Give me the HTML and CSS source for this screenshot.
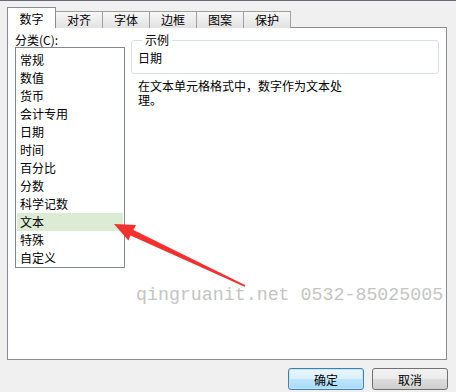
FILE: index.html
```html
<!DOCTYPE html>
<html lang="zh-CN">
<head>
    <meta charset="UTF-8">
    <title>设置单元格格式</title>
    <link rel="stylesheet" href="styles.css">
</head>
<body>
    <div class="dialog">
        <div class="tabs">
            <div class="tab active">数字</div>
            <div class="tab">对齐</div>
            <div class="tab">字体</div>
            <div class="tab">边框</div>
            <div class="tab">图案</div>
            <div class="tab">保护</div>
        </div>
        <div class="panel">
            <div class="left-col">
                <div class="label">分类(C):</div>
                <ul class="category-list">
                    <li>常规</li>
                    <li>数值</li>
                    <li>货币</li>
                    <li>会计专用</li>
                    <li>日期</li>
                    <li>时间</li>
                    <li>百分比</li>
                    <li>分数</li>
                    <li>科学记数</li>
                    <li class="selected">文本</li>
                    <li>特殊</li>
                    <li>自定义</li>
                </ul>
            </div>
            <div class="right-col">
                <fieldset class="sample">
                    <legend>示例</legend>
                    <div class="sample-value">日期</div>
                </fieldset>
                <p class="desc">在文本单元格格式中，数字作为文本处理。</p>
            </div>
        </div>
        <div class="buttons">
            <button class="btn default">确定</button>
            <button class="btn">取消</button>
        </div>

        <!-- annotation overlay from the screenshot -->
        <svg class="arrow" width="456" height="392" viewBox="0 0 456 392">
            <polygon points="114,224 136,225 133.5,230 245.5,285.3 244.6,286.7 130.5,235.5 128.4,240.5" fill="#f2302e"/>
        </svg>
        <div class="watermark">qingruanit.net 0532-85025005</div>
    </div>
</body>
</html>
```

FILE: styles.css
```css
body { margin: 0; background: #f0f0f0; font-family: "Noto Sans CJK SC", "Liberation Sans", sans-serif; font-size: 12px; color: #000; }
.dialog { position: relative; height: 391px; border-top: 1px solid #6a6a72; padding: 7px 9px 0 7px; overflow: hidden; }

.tabs { display: flex; align-items: flex-end; height: 20px; position: relative; z-index: 1; }
.tab { width: 46px; height: 16px; line-height: 16px; text-align: center; background: linear-gradient(#f7f7f7, #e2e2e2); border: 1px solid #a0a0a0; border-bottom: none; margin-right: -1px; }
.tab.active { width: 47px; height: 20px; line-height: 22px; background: #fff; border-color: #898c95; }
.tab.active + .tab { border-left: 1px solid #898c95; }

.panel { display: flex; gap: 6px; height: 333px; box-sizing: border-box; margin-top: -1px; background: #fff; border: 1px solid #898c95; padding: 4px 7px 0 7px; }

.label { height: 15px; line-height: 15px; }
.category-list { list-style: none; margin: 0; padding: 3px 1px 0; width: 110px; height: 221px; box-sizing: border-box; border: 1px solid #828790; }
.category-list li { height: 18px; line-height: 18px; padding-left: 3px; }
.category-list li.selected { background: #dbebd4; }

.right-col { padding-top: 1px; }
.sample { width: 308px; box-sizing: border-box; margin: 0; padding: 2px 6px 6px; border: 1px solid #d9dfe4; border-radius: 3px; }
.sample legend { padding: 0 3px; margin-left: 4px; line-height: 14px; }
.sample-value { height: 18px; line-height: 18px; }
.desc { width: 210px; margin: 5px 0 0 7px; line-height: 14px; }

.buttons { display: flex; justify-content: flex-end; gap: 8px; margin-top: 8px; margin-right: -1px; }
.btn { width: 76px; height: 22px; padding: 0; font-family: inherit; font-size: 12px; border: 1px solid #707070; border-radius: 3px; background: linear-gradient(#f2f2f2 0%, #ebebeb 50%, #dddddd 51%, #cfcfcf 100%); }
.btn.default { border-color: #3c7fb1; background: linear-gradient(#eaf6fd 0%, #d9f0fc 50%, #bee6fd 51%, #a7d9f5 100%); box-shadow: inset 0 0 0 1px #c5e7fb; }

.arrow { position: absolute; left: 0; top: -1px; pointer-events: none; }
.watermark { position: absolute; left: 136px; top: 284px; font-family: "Liberation Mono", monospace; font-size: 18.3px; line-height: 20px; color: #c4c4c4; white-space: nowrap; }
```
